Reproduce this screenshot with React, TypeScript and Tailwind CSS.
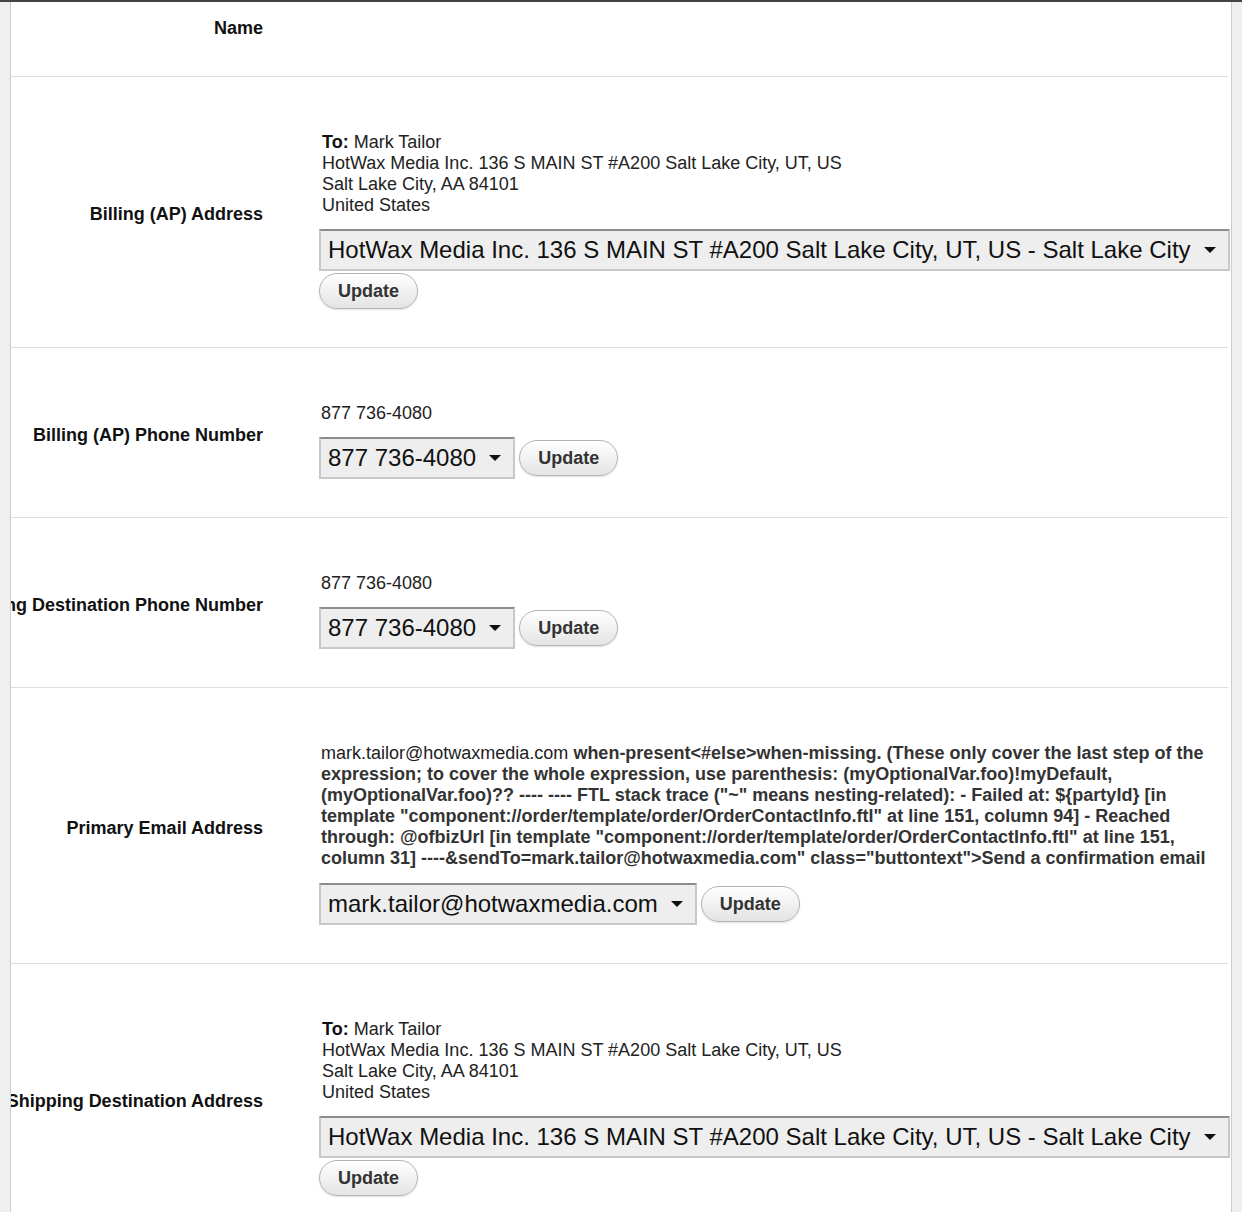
import React from 'react';

const font = { fontFamily: '"Liberation Sans", Arial, sans-serif' };

function Select({ value }: { value: string }) {
  return (
    <div className="inline-flex items-center h-[42px] bg-[#eeeeee] border-2 border-[#c8c8c8] border-t-[#8c8c8c] pl-[7px] pr-[12px] text-[24px] text-[#111] whitespace-nowrap">
      <span>{value}</span>
      <span className="ml-[13px] w-0 h-0 border-l-[6px] border-r-[6px] border-t-[6px] border-l-transparent border-r-transparent border-t-[#111]" />
    </div>
  );
}

function UpdateButton() {
  return (
    <button className="h-[36px] px-[18px] rounded-full border border-[#b4b4b4] bg-gradient-to-b from-white to-[#e4e4e4] shadow-[0_1px_2px_rgba(0,0,0,0.12)] text-[18px] font-bold text-[#333]">
      Update
    </button>
  );
}

function Row({ label, children, last }: { label: string; children: React.ReactNode; last?: boolean }) {
  return (
    <div className={`flex ${last ? '' : 'border-b border-[#dddddd]'}`}>
      <div className="w-[252px] shrink-0 flex items-center justify-end pt-[5px]">
        <span className="whitespace-nowrap text-[18px] font-bold text-[#111]">{label}</span>
      </div>
      <div className="flex-1 min-w-0 pl-[58px] pt-[55px] pb-[38px]">{children}</div>
    </div>
  );
}

function Address() {
  return (
    <div className="ml-[1px] text-[18px] leading-[21px] text-[#222]">
      <div><b className="text-[#111]">To:</b> Mark Tailor</div>
      <div>HotWax Media Inc. 136 S MAIN ST #A200 Salt Lake City, UT, US</div>
      <div>Salt Lake City, AA 84101</div>
      <div>United States</div>
    </div>
  );
}

export default function App() {
  const addr = 'HotWax Media Inc. 136 S MAIN ST #A200 Salt Lake City, UT, US - Salt Lake City';
  return (
    <div style={font} className="min-h-screen bg-[#efefef] border-t-2 border-[#444]">
      <div className="ml-[10px] mr-[10px] min-h-screen bg-white border-l border-r border-[#cccccc] overflow-hidden">
        <div className="mr-[3px]">
          <div className="flex h-[75px] border-b border-[#dddddd]">
            <div className="w-[252px] shrink-0 flex justify-end pt-[13px]">
              <span className="text-[18px] font-bold text-[#111]">Name</span>
            </div>
          </div>

          <Row label="Billing (AP) Address">
            <Address />
            <div className="mt-[13px] -ml-[2px]">
              <Select value={addr} />
            </div>
            <div className="mt-[2px] -ml-[2px]">
              <UpdateButton />
            </div>
          </Row>

          <Row label="Billing (AP) Phone Number">
            <div className="text-[18px] leading-[21px] text-[#222]">877 736-4080</div>
            <div className="mt-[13px] -ml-[2px] flex items-center gap-[4px]">
              <Select value="877 736-4080" />
              <UpdateButton />
            </div>
          </Row>

          <Row label="Shipping Destination Phone Number">
            <div className="text-[18px] leading-[21px] text-[#222]">877 736-4080</div>
            <div className="mt-[13px] -ml-[2px] flex items-center gap-[4px]">
              <Select value="877 736-4080" />
              <UpdateButton />
            </div>
          </Row>

          <Row label="Primary Email Address">
            <div className="text-[18px] leading-[21px] text-[#222] whitespace-nowrap">
              <div>
                mark.tailor@hotwaxmedia.com{' '}
                <b className="text-[#333]">when-present&lt;#else&gt;when-missing. (These only cover the last step of the</b>
              </div>
              <div className="font-bold text-[#333]">expression; to cover the whole expression, use parenthesis: (myOptionalVar.foo)!myDefault,</div>
              <div className="font-bold text-[#333]">(myOptionalVar.foo)?? ---- ---- FTL stack trace ("~" means nesting-related): - Failed at: ${'{'}partyId{'}'} [in</div>
              <div className="font-bold text-[#333]">template "component://order/template/order/OrderContactInfo.ftl" at line 151, column 94] - Reached</div>
              <div className="font-bold text-[#333]">through: @ofbizUrl [in template "component://order/template/order/OrderContactInfo.ftl" at line 151,</div>
              <div className="font-bold text-[#333]">column 31] ----&amp;sendTo=mark.tailor@hotwaxmedia.com" class="buttontext"&gt;Send a confirmation email</div>
            </div>
            <div className="mt-[14px] -ml-[2px] flex items-center gap-[4px]">
              <Select value="mark.tailor@hotwaxmedia.com" />
              <UpdateButton />
            </div>
          </Row>

          <Row label="Shipping Destination Address" last>
            <Address />
            <div className="mt-[13px] -ml-[2px]">
              <Select value={addr} />
            </div>
            <div className="mt-[2px] -ml-[2px]">
              <UpdateButton />
            </div>
          </Row>
        </div>
      </div>
    </div>
  );
}
